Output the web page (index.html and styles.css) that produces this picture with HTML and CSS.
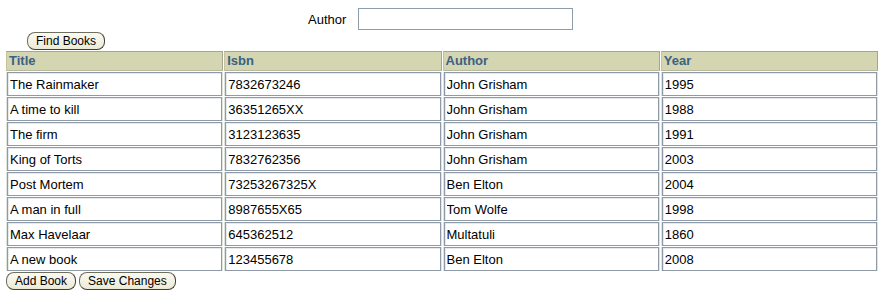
FILE: index.html
```html
<!DOCTYPE html>
<html>
<head>
<meta charset="utf-8">
<link rel="stylesheet" href="styles.css">
</head>
<body>
<div class="search">
  <label class="label">Author</label>
  <input class="field" type="text" value="">
</div>
<div class="find-row">
  <button class="btn">Find Books</button>
</div>
<table class="books">
  <thead>
    <tr><th>Title</th><th>Isbn</th><th>Author</th><th>Year</th></tr>
  </thead>
  <tbody>
    <tr><td><input class="cell" value="The Rainmaker"></td><td><input class="cell" value="7832673246"></td><td><input class="cell" value="John Grisham"></td><td><input class="cell" value="1995"></td></tr>
    <tr><td><input class="cell" value="A time to kill"></td><td><input class="cell" value="36351265XX"></td><td><input class="cell" value="John Grisham"></td><td><input class="cell" value="1988"></td></tr>
    <tr><td><input class="cell" value="The firm"></td><td><input class="cell" value="3123123635"></td><td><input class="cell" value="John Grisham"></td><td><input class="cell" value="1991"></td></tr>
    <tr><td><input class="cell" value="King of Torts"></td><td><input class="cell" value="7832762356"></td><td><input class="cell" value="John Grisham"></td><td><input class="cell" value="2003"></td></tr>
    <tr><td><input class="cell" value="Post Mortem"></td><td><input class="cell" value="73253267325X"></td><td><input class="cell" value="Ben Elton"></td><td><input class="cell" value="2004"></td></tr>
    <tr><td><input class="cell" value="A man in full"></td><td><input class="cell" value="8987655X65"></td><td><input class="cell" value="Tom Wolfe"></td><td><input class="cell" value="1998"></td></tr>
    <tr><td><input class="cell" value="Max Havelaar"></td><td><input class="cell" value="645362512"></td><td><input class="cell" value="Multatuli"></td><td><input class="cell" value="1860"></td></tr>
    <tr><td><input class="cell" value="A new book"></td><td><input class="cell" value="123455678"></td><td><input class="cell" value="Ben Elton"></td><td><input class="cell" value="2008"></td></tr>
  </tbody>
</table>
<div class="actions">
  <button class="btn">Add Book</button>
  <button class="btn">Save Changes</button>
</div>
</body>
</html>
```
FILE: styles.css
```css
html, body {
  margin: 0;
  padding: 0;
  background: #ffffff;
}
body {
  font-family: "Liberation Sans", Arial, sans-serif;
  font-size: 13px;
  color: #000;
}
.search {
  display: flex;
  align-items: center;
  padding: 8px 0 0 308px;
  height: 22px;
}
.label {
  font-size: 13px;
  margin-right: 12px;
}
.field {
  box-sizing: border-box;
  width: 215px;
  height: 22px;
  border: 1px solid #8d9dab;
  background: #fff;
  margin: 0;
  padding: 0 3px;
  font: 13px "Liberation Sans", Arial, sans-serif;
}
.find-row {
  padding: 2px 0 0 27px;
  height: 18px;
}
.btn {
  box-sizing: border-box;
  height: 18px;
  margin: 0;
  padding: 0 8px;
  font: 12px "Liberation Sans", Arial, sans-serif;
  color: #000;
  background: linear-gradient(#fbfaf1, #ecead6);
  border: 1px solid #6f6f60;
  border-bottom-color: #3f3f36;
  border-right-color: #3f3f36;
  border-radius: 8px;
  line-height: 15px;
}
.books {
  margin: 0 0 0 5px;
  width: 874px;
  border-collapse: separate;
  border-spacing: 1px;
  table-layout: fixed;
}
.books th {
  text-align: left;
  font-weight: bold;
  font-size: 13px;
  color: #3b6185;
  background: #d4d5b1;
  border-top: 1px solid #a6a68e;
  border-left: 1px solid #c3c4a2;
  border-right: 1px solid #a6a68e;
  border-bottom: 1px solid #b8b99c;
  height: 18px;
  padding: 0 0 0 2px;
  line-height: 18px;
}
.books td {
  padding: 0;
  border: 0;
  height: 24px;
  background: #dfe4dc;
}
.cell {
  box-sizing: border-box;
  width: calc(100% - 2px);
  height: 24px;
  margin: 0 1px;
  padding: 0 2px;
  font: 13px "Liberation Sans", Arial, sans-serif;
  color: #000;
  background: #fff;
  border: 1px solid #8e9ba6;
  box-shadow: inset 1px 1px 0 #e6eaee;
  display: block;
}
.actions {
  display: flex;
  gap: 3px;
  padding: 0 0 0 6px;
}
```
